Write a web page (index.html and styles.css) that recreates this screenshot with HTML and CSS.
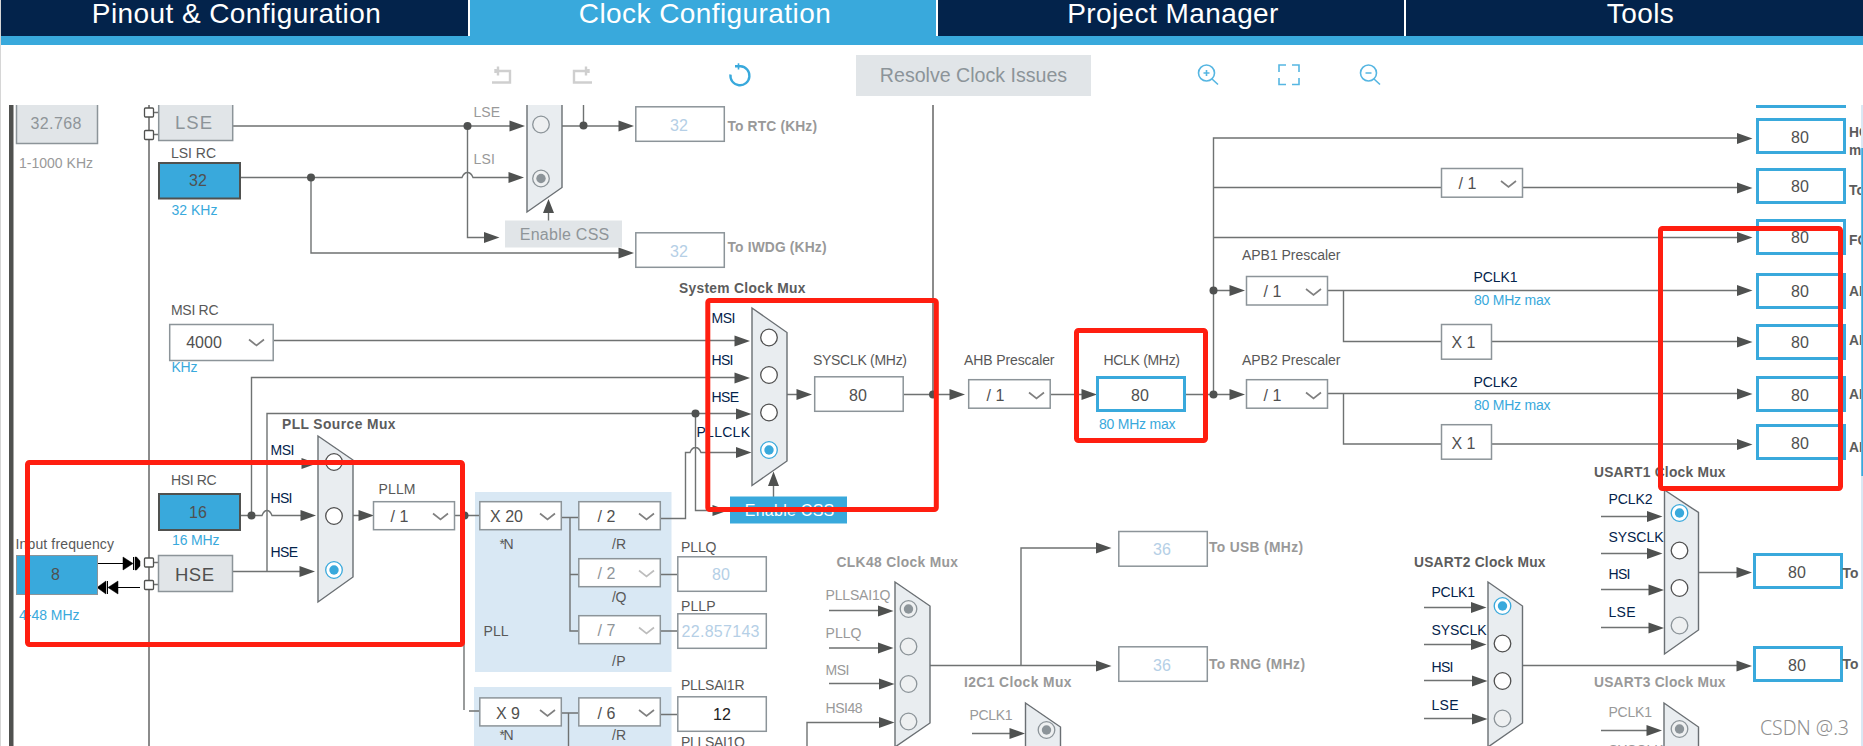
FILE: index.html
```
<!DOCTYPE html>
<html lang="en">
<head>
    <meta charset="UTF-8">
    <meta name="viewport" content="width=device-width, initial-scale=1.0">
    <title>Clock Configuration</title>
    <link rel="stylesheet" href="styles.css">
</head>
<body>

    <nav class="tabs">
        <a class="tab">Pinout &amp; Configuration</a>
        <a class="tab active">Clock Configuration</a>
        <a class="tab">Project Manager</a>
        <a class="tab">Tools</a>
    </nav>

    <div class="toolbar">
        <svg class="tool undo" width="22" height="22" viewBox="0 0 22 22">
            <path d="M1 18.500H19V7H4M7 2.500V11.500M4.500 5V9"/>
        </svg>
        <svg class="tool redo" width="22" height="22" viewBox="0 0 22 22">
            <path d="M20 18.500H2V7H17M14 2.500V11.500M16.500 5V9"/>
        </svg>
        <svg class="tool refresh" width="24" height="24" viewBox="0 0 24 24">
            <path d="M2.500 11.500A9.500 9.500 0 1 0 12.500 3.300H7"/>
            <path class="tip" d="M10.500 0.300V6.500"/>
        </svg>
        <button class="resolve">Resolve Clock Issues</button>
        <svg class="tool zoom-in" width="22" height="22" viewBox="0 0 22 22">
            <circle cx="9.500" cy="9" r="8"/><path d="M6.500 9H12.500M9.500 6V12M15 15L21 20.500"/>
        </svg>
        <svg class="tool fit" width="22" height="22" viewBox="0 0 22 22">
            <path d="M1 8V1H8M14 1H21V8M21 14V20.500H14M8 20.500H1V14"/>
        </svg>
        <svg class="tool zoom-out" width="22" height="22" viewBox="0 0 22 22">
            <circle cx="9.500" cy="9" r="8"/><path d="M6.500 9H12.500M15 15L21 20.500"/>
        </svg>
    </div>

    <main class="canvas">
    <svg width="1863" height="641" viewBox="0 105 1863 641">
        <defs>
            <!-- arrow origin is its tip -->
            <path id="arrow" d="M0 0L-15.500 -5.500V5.500Z"/>
            <path id="chev" d="M0 0L7.500 6L15 0"/>
            <circle id="dot" r="4"/>
            <rect id="pin" width="9" height="9" rx="1"/>
        </defs>

        <!-- PLL panels -->
        <rect class="panel" x="475" y="492" width="196.500" height="180"/>
        <rect class="panel" x="474" y="687" width="197.500" height="70"/>

        <!-- chip edge -->
        <rect class="edge" x="9" y="100" width="4.500" height="650"/>
        <path class="bus" d="M149 105V746M933 105V394"/>

        <!-- wires -->
        <g class="wire">
            <path d="M154 112.500H158M154 134.500H158M154 562.500H158M154 584.500H158"/>
            <path d="M233 126H511M467.500 126V237.500H485"/>
            <path d="M241 177.500H462Q464 172.500 467.500 172.500Q471 172.500 473 177.500H510M311 178V253H620"/>
            <path d="M562 126H620M583.500 105V126M548.500 210V221"/>
            <path d="M274 340.500H736M251.500 515V377.500H736M267 571V413.500H738"/>
            <path d="M241 515.500H262Q264 510.500 267 510.500Q270 510.500 272 515.500H302M233 571.500H300M353 515.500H360"/>
            <path d="M455 515.500H479M464 516V710M469 711H479"/>
            <path d="M562 517.500H578M570 517.500V631H578M570 574.500H578M661 574.500H677M661 631H677"/>
            <path d="M661 518.500H685.500V452.500H690Q692 447.500 695.500 447.500Q699 447.500 701 452.500H738M695.500 413.500V510.500H713"/>
            <path d="M562 713H578M568.500 713V746M661 714.500H677"/>
            <path d="M787 394.500H797M904 394.500H950M773.500 484V497M1051 394.500H1083M1186 394.500H1231"/>
            <path d="M1213.500 394.500V138H1738M1213.500 187.500H1441M1523 187.500H1738M1213.500 237.500H1738M1213.500 290.500H1231"/>
            <path d="M1328 290.500H1738M1343.500 290.500V341.500H1441M1492 341.500H1738"/>
            <path d="M1328 393.500H1738M1343.500 393.500V444H1441M1492 444H1738"/>
            <path d="M829 610.500H879M829 648H879M829 683.500H880M807 746V722.500H880"/>
            <path d="M930 665.500H1097M1021 665.500V548H1097M972 733.500H1010"/>
            <path d="M1601 516.500H1648M1601 553.500H1648M1601 589.500H1649M1601 627.500H1649M1698 572.500H1737"/>
            <path d="M1424 607.500H1472M1424 644.500H1472M1424 680.500H1473M1424 718.500H1473M1522 665.500H1737M1601 730.500H1647"/>
        </g>

        <!-- crystal in / out -->
        <g class="osc">
            <path d="M98 563.500H124M118 587.500H140"/>
            <path class="solid" d="M123 557L133 563.500L123 570ZM135 557H136.500L140 561V566L136.500 570H135ZM118 581L108 587.500L118 594ZM106 581L97 587.500L106 594Z"/>
            <path d="M133.500 557V570M107.500 581V594"/>
        </g>
        <g class="pin">
            <use href="#pin" x="144.500" y="108"/><use href="#pin" x="144.500" y="130.500"/>
            <use href="#pin" x="144.500" y="558"/><use href="#pin" x="144.500" y="580.500"/>
        </g>

        <!-- muxes -->
        <g class="mux">
            <path d="M527 95V212L562 187.500V95Z"/>
            <path d="M318 436V602L353 577V460Z"/>
            <path d="M752 308V485.500L787 461V332.500Z"/>
            <path d="M895 582V747L930 723V606Z"/>
            <path d="M1025.500 703V770H1060.500V727Z"/>
            <path d="M1664.500 490V654L1698.500 630V512.500Z"/>
            <path d="M1488 582V747L1522.500 723V606Z"/>
            <path d="M1664 703V770H1698.500V727Z"/>
        </g>

        <g class="head">
            <use href="#arrow" x="525" y="126"/><use href="#arrow" x="524" y="177.500"/>
            <use href="#arrow" x="499.500" y="237.500"/><use href="#arrow" x="634" y="126"/>
            <use href="#arrow" x="634" y="253"/><use href="#arrow" x="750" y="341"/>
            <use href="#arrow" x="750" y="378"/><use href="#arrow" x="751.500" y="414"/>
            <use href="#arrow" x="751.500" y="452.500"/><use href="#arrow" x="728" y="510.500"/>
            <use href="#arrow" x="317" y="463.500"/><use href="#arrow" x="316" y="515.500"/>
            <use href="#arrow" x="315" y="571.500"/><use href="#arrow" x="374" y="515.500"/>
            <use href="#arrow" x="812" y="394.500"/><use href="#arrow" x="965" y="394.500"/>
            <use href="#arrow" x="1097" y="394.500"/><use href="#arrow" x="1245" y="394.500"/>
            <use href="#arrow" x="1245" y="290.500"/>
            <use href="#arrow" x="1752.500" y="138.500"/><use href="#arrow" x="1752.500" y="188"/>
            <use href="#arrow" x="1752.500" y="237.500"/><use href="#arrow" x="1752.500" y="290.500"/>
            <use href="#arrow" x="1752.500" y="342"/><use href="#arrow" x="1752.500" y="394"/>
            <use href="#arrow" x="1752.500" y="444.500"/>
            <use href="#arrow" x="893.500" y="611"/><use href="#arrow" x="893.500" y="648"/>
            <use href="#arrow" x="894.500" y="684"/><use href="#arrow" x="894.500" y="722.500"/>
            <use href="#arrow" x="1111.500" y="548"/><use href="#arrow" x="1111.500" y="666"/>
            <use href="#arrow" x="1025" y="733.500"/>
            <use href="#arrow" x="1662.500" y="516.500"/><use href="#arrow" x="1662.500" y="553.500"/>
            <use href="#arrow" x="1664" y="590"/><use href="#arrow" x="1664" y="628"/>
            <use href="#arrow" x="1752" y="572.500"/><use href="#arrow" x="1752" y="666"/>
            <use href="#arrow" x="1486.500" y="607.500"/><use href="#arrow" x="1486.500" y="644.500"/>
            <use href="#arrow" x="1487.500" y="681"/><use href="#arrow" x="1487.500" y="719"/>
            <use href="#arrow" x="1662" y="730.500"/>
            <path d="M548.500 199L554 213H543ZM773.500 471.500L779 486H768Z"/>
            <use href="#dot" x="467.500" y="126"/><use href="#dot" x="311" y="177.500"/>
            <use href="#dot" x="583.500" y="125.500"/><use href="#dot" x="251.500" y="515.500"/>
            <use href="#dot" x="464.500" y="515.500"/><use href="#dot" x="695.500" y="413.500"/>
            <use href="#dot" x="933" y="394.500"/><use href="#dot" x="1213.500" y="290.500"/>
            <use href="#dot" x="1213.500" y="394.500"/>
        </g>

        <!-- mux inputs -->
        <g class="radio">
            <circle cx="334" cy="462" r="8.300"/><circle cx="334" cy="516" r="8.300"/>
            <circle cx="769" cy="337.500" r="8.300"/><circle cx="769" cy="375" r="8.300"/><circle cx="769" cy="412.500" r="8.300"/>
            <circle cx="1679.500" cy="550.500" r="8.300"/><circle cx="1679.500" cy="588" r="8.300"/>
            <circle cx="1502.500" cy="643.500" r="8.300"/><circle cx="1502.500" cy="681" r="8.300"/>
        </g>
        <g class="radio off">
            <circle cx="541" cy="124.500" r="8.300"/><circle cx="541" cy="178.500" r="8.300"/>
            <circle cx="908.500" cy="609" r="8.300"/><circle cx="908.500" cy="646.500" r="8.300"/>
            <circle cx="908.500" cy="684" r="8.300"/><circle cx="908.500" cy="721.500" r="8.300"/>
            <circle cx="1046.500" cy="730" r="8.300"/><circle cx="1679.500" cy="729" r="8.300"/>
            <circle cx="1679.500" cy="625.500" r="8.300"/><circle cx="1502.500" cy="718.500" r="8.300"/>
            <circle class="fill" cx="541" cy="178.500" r="4.700"/><circle class="fill" cx="908.500" cy="609" r="4.700"/>
            <circle class="fill" cx="1046.500" cy="730" r="4.700"/><circle class="fill" cx="1679.500" cy="729" r="4.700"/>
        </g>
        <g class="radio on">
            <circle cx="334" cy="570" r="8.300"/><circle class="fill" cx="334" cy="570" r="4.700"/>
            <circle cx="769" cy="450" r="8.300"/><circle class="fill" cx="769" cy="450" r="4.700"/>
            <circle cx="1679.500" cy="513" r="8.300"/><circle class="fill" cx="1679.500" cy="513" r="4.700"/>
            <circle cx="1502.500" cy="606" r="8.300"/><circle class="fill" cx="1502.500" cy="606" r="4.700"/>
        </g>

        <!-- boxes -->
        <g class="box gray">
            <rect x="16.500" y="95" width="81" height="48.500"/>
            <rect x="158.700" y="95" width="74" height="45.500"/>
            <rect x="158.500" y="555.500" width="74" height="36"/>
        </g>
        <g class="box source">
            <rect x="159" y="163" width="81" height="35.500"/>
            <rect x="159" y="494" width="81" height="36"/>
            <rect class="input" x="16.500" y="555.500" width="81" height="39"/>
        </g>
        <g class="box">
            <rect x="635.800" y="106.800" width="88.500" height="34.500"/>
            <rect x="635.800" y="232.800" width="88.500" height="34.500"/>
            <rect x="169.700" y="324.500" width="103.500" height="36"/>
            <rect x="373.500" y="501.700" width="81" height="28"/>
            <rect x="479.800" y="501.700" width="81.500" height="28"/>
            <rect x="578.800" y="501.700" width="81.500" height="28"/>
            <rect x="578.800" y="558.700" width="81.500" height="28"/>
            <rect x="578.800" y="615.700" width="81.500" height="28"/>
            <rect x="479.800" y="697.900" width="81.500" height="28"/>
            <rect x="578.800" y="697.900" width="81.500" height="28"/>
            <rect x="677.800" y="556.800" width="88.500" height="34.500"/>
            <rect x="677.800" y="613.800" width="88.500" height="34.500"/>
            <rect x="677.800" y="696.800" width="88.500" height="34.500"/>
            <rect x="814.700" y="376.800" width="88.500" height="34.500"/>
            <rect x="968.700" y="379.700" width="81.500" height="28.500"/>
            <rect x="1246.500" y="276.500" width="81" height="28.500"/>
            <rect x="1246.500" y="379.700" width="81" height="28.500"/>
            <rect x="1441.500" y="168.500" width="81" height="28.700"/>
            <rect x="1441.500" y="324.500" width="50" height="34.700"/>
            <rect x="1441.500" y="424.700" width="50" height="34.500"/>
            <rect x="1118.800" y="531.500" width="88.500" height="34.700"/>
            <rect x="1118.800" y="646.800" width="88.500" height="34.500"/>
        </g>
        <g class="box clock">
            <rect x="1097.500" y="377.500" width="87" height="33"/>
            <rect x="1757.500" y="73.500" width="87" height="33"/>
            <rect x="1757.500" y="119.500" width="87" height="33"/>
            <rect x="1757.500" y="169.500" width="87" height="33"/>
            <rect x="1757.500" y="220.500" width="87" height="33"/>
            <rect x="1757.500" y="274.500" width="87" height="33"/>
            <rect x="1757.500" y="325.500" width="87" height="33"/>
            <rect x="1757.500" y="377.500" width="87" height="33"/>
            <rect x="1757.500" y="425.500" width="87" height="33"/>
            <rect x="1754.500" y="554.500" width="87" height="33"/>
            <rect x="1754.500" y="647.500" width="87" height="33"/>
        </g>
        <rect class="css-btn" x="505" y="220.500" width="117" height="27"/>
        <rect class="css-btn on" x="730" y="496.500" width="117" height="27"/>

        <g class="chev">
            <use href="#chev" x="249" y="339.500"/><use href="#chev" x="433" y="513.500"/>
            <use href="#chev" x="540" y="513.500"/><use href="#chev" x="639" y="513.500"/>
            <use href="#chev" x="540" y="710"/><use href="#chev" x="639" y="710"/>
            <use href="#chev" x="1029" y="392.500"/><use href="#chev" x="1306" y="289"/>
            <use href="#chev" x="1306" y="392.500"/><use href="#chev" x="1501" y="181"/>
        </g>
        <g class="chev dim">
            <use href="#chev" x="639" y="570.500"/><use href="#chev" x="639" y="627.500"/>
        </g>

        <!-- captions -->
        <g class="cap">
            <text x="171" y="158" textLength="45">LSI RC</text>
            <text x="171" y="315" textLength="47.500">MSI RC</text>
            <text x="171" y="485" textLength="45.500">HSI RC</text>
            <text x="15.500" y="549" textLength="98.500">Input frequency</text>
            <text x="378.500" y="494" textLength="37">PLLM</text>
            <text x="499.500" y="549" textLength="14">*N</text>
            <text x="612" y="549" textLength="14">/R</text>
            <text x="612" y="602" textLength="14.500">/Q</text>
            <text x="612" y="666" textLength="13.500">/P</text>
            <text x="483.500" y="636" textLength="25">PLL</text>
            <text x="499.500" y="740" textLength="14">*N</text>
            <text x="612" y="740" textLength="14">/R</text>
            <text x="681" y="552" textLength="35.500">PLLQ</text>
            <text x="681" y="611" textLength="34.500">PLLP</text>
            <text x="681" y="690" textLength="63.500">PLLSAI1R</text>
            <text x="681" y="746.500" textLength="64">PLLSAI1Q</text>
            <text x="813" y="365" textLength="94">SYSCLK (MHz)</text>
            <text x="964" y="365" textLength="90.500">AHB Prescaler</text>
            <text x="1103.500" y="365" textLength="76.500">HCLK (MHz)</text>
            <text x="1242" y="260" textLength="98.500">APB1 Prescaler</text>
            <text x="1242" y="365" textLength="98.500">APB2 Prescaler</text>
        </g>
        <g class="cap dim">
            <text x="19" y="168" textLength="74">1-1000 KHz</text>
            <text x="473.500" y="117" textLength="26.500">LSE</text>
            <text x="473.500" y="164" textLength="21.500">LSI</text>
            <text x="825.500" y="600" textLength="65">PLLSAI1Q</text>
            <text x="825.500" y="638" textLength="36">PLLQ</text>
            <text x="825.500" y="675" textLength="24">MSI</text>
            <text x="825.500" y="713" textLength="37">HSI48</text>
            <text x="969.500" y="720" textLength="43">PCLK1</text>
            <text x="1608.500" y="717" textLength="43.500">PCLK1</text>
            <text x="1608.500" y="754.500" textLength="55">SYSCLK</text>
        </g>
        <g class="cap sig">
            <text x="270.500" y="455" textLength="24">MSI</text>
            <text x="270.500" y="502.500" textLength="22">HSI</text>
            <text x="270.500" y="557" textLength="27.500">HSE</text>
            <text x="711.500" y="323" textLength="24">MSI</text>
            <text x="711.500" y="365" textLength="22">HSI</text>
            <text x="711.500" y="402" textLength="27.500">HSE</text>
            <text x="696.500" y="437" textLength="53.500">PLLCLK</text>
            <text x="1473.500" y="282" textLength="44">PCLK1</text>
            <text x="1473.500" y="387" textLength="44">PCLK2</text>
            <text x="1608.500" y="504" textLength="44">PCLK2</text>
            <text x="1608.500" y="542" textLength="55">SYSCLK</text>
            <text x="1608.500" y="579" textLength="22">HSI</text>
            <text x="1608.500" y="617" textLength="27">LSE</text>
            <text x="1431.500" y="597" textLength="43.500">PCLK1</text>
            <text x="1431.500" y="635" textLength="55">SYSCLK</text>
            <text x="1431.500" y="672" textLength="22">HSI</text>
            <text x="1431.500" y="710" textLength="27">LSE</text>
        </g>
        <g class="cap limit">
            <text x="171.500" y="215" textLength="46">32 KHz</text>
            <text x="171.500" y="372" textLength="26">KHz</text>
            <text x="172" y="545" textLength="47.500">16 MHz</text>
            <text x="19" y="620" textLength="60.500">4-48 MHz</text>
            <text x="1099" y="429" textLength="76.500">80 MHz max</text>
            <text x="1474" y="305" textLength="76.500">80 MHz max</text>
            <text x="1474" y="410" textLength="76.500">80 MHz max</text>
        </g>
        <g class="title">
            <text x="282" y="429" textLength="113.500">PLL Source Mux</text>
            <text x="679" y="293" textLength="126.500">System Clock Mux</text>
            <text x="1594" y="477" textLength="131.500">USART1 Clock Mux</text>
            <text x="1414" y="567" textLength="131.500">USART2 Clock Mux</text>
            <text x="1849" y="137">HC</text>
            <text x="1849" y="155">m</text>
            <text x="1849" y="195">To</text>
            <text x="1849" y="245">FC</text>
            <text x="1849" y="296">AP</text>
            <text x="1849" y="345">AP</text>
            <text x="1849" y="399">AP</text>
            <text x="1849" y="452">AP</text>
            <text x="1842.500" y="578" textLength="16">To</text>
            <text x="1842.500" y="669" textLength="16">To</text>
        </g>
        <g class="title dim">
            <text x="727.500" y="131" textLength="89.500">To RTC (KHz)</text>
            <text x="727.500" y="252" textLength="99">To IWDG (KHz)</text>
            <text x="836.500" y="567" textLength="121.500">CLK48 Clock Mux</text>
            <text x="964" y="687" textLength="107.500">I2C1 Clock Mux</text>
            <text x="1594" y="687" textLength="131.500">USART3 Clock Mux</text>
            <text x="1209" y="552" textLength="94">To USB (MHz)</text>
            <text x="1209" y="669" textLength="96">To RNG (MHz)</text>
        </g>

        <!-- values -->
        <g class="val">
            <text x="198" y="185.500">32</text>
            <text x="198" y="518">16</text>
            <text x="55.500" y="580">8</text>
            <text x="204" y="348">4000</text>
            <text x="399.500" y="522">/ 1</text>
            <text x="506.500" y="522">X 20</text>
            <text x="606.500" y="522">/ 2</text>
            <text x="508" y="718.500">X 9</text>
            <text x="606.500" y="718.500">/ 6</text>
            <text class="black" x="722" y="720">12</text>
            <text x="858" y="401">80</text>
            <text x="995.500" y="400.500">/ 1</text>
            <text x="1140" y="401">80</text>
            <text x="1272.500" y="297">/ 1</text>
            <text x="1272.500" y="400.500">/ 1</text>
            <text x="1467.500" y="189">/ 1</text>
            <text x="1463.500" y="348">X 1</text>
            <text x="1463.500" y="449">X 1</text>
            <text x="1800" y="143">80</text>
            <text x="1800" y="192">80</text>
            <text x="1800" y="243">80</text>
            <text x="1800" y="297">80</text>
            <text x="1800" y="348">80</text>
            <text x="1800" y="401">80</text>
            <text x="1800" y="449">80</text>
            <text x="1797" y="578">80</text>
            <text x="1797" y="671">80</text>
        </g>
        <g class="val dim">
            <text x="56" y="129" textLength="51">32.768</text>
            <text x="564.500" y="240" textLength="89.500">Enable CSS</text>
            <text x="606.500" y="579">/ 2</text>
            <text x="606.500" y="636">/ 7</text>
        </g>
        <g class="val pale">
            <text x="679" y="131">32</text>
            <text x="679" y="257">32</text>
            <text x="721" y="580">80</text>
            <text x="720.500" y="637" textLength="78">22.857143</text>
            <text x="1162" y="555">36</text>
            <text x="1162" y="671">36</text>
        </g>
        <text class="val white" x="789.500" y="516" textLength="89.500">Enable CSS</text>
        <text class="osc-name dim" x="175" y="129" textLength="37">LSE</text>
        <text class="osc-name" x="175" y="581" textLength="39">HSE</text>

        <!-- scrollbar -->
        <rect class="track" x="1861" y="105" width="3" height="641"/>
        <rect class="thumb" x="1861.300" y="148" width="3" height="328"/>

        <!-- highlights -->
        <g class="mark">
            <rect x="27.500" y="462.500" width="435" height="182" rx="2"/>
            <rect x="707.800" y="300.500" width="228.500" height="209" rx="2"/>
            <rect x="1076.500" y="330.500" width="129" height="110" rx="2"/>
            <rect x="1660.500" y="228.500" width="180" height="260" rx="2"/>
        </g>

        <text class="watermark" x="1760" y="735" textLength="89">CSDN @.3</text>
    </svg>
    </main>

</body>
</html>
```
FILE: styles.css
```
* {
    box-sizing: border-box;
}
body {
    font-family: "Liberation Sans", Arial, sans-serif;
    margin: 0;
    height: 746px;
    overflow: hidden;
    background-color: #fff;
    box-shadow: inset 1px 0 0 #d6d6d6;
}
/* Tabs */
.tabs {
    display: grid;
    grid-template-columns: 469px 468px 468px 1fr;
    height: 45px;
    margin-left: 1px;
    border-bottom: 9px solid #39a9dc;
}
.tab {
    height: 36px;
    padding-left: 4px;
    background-color: #03234b;
    border-right: 2px solid #fff;
    color: #fff;
    font-size: 28px;
    line-height: 28px;
    letter-spacing: 0.42px;
    text-align: center;
}
.tab:last-child {
    padding-left: 12px;
    border-right: none;
}
.tab.active {
    background-color: #39a9dc;
}
/* Toolbar */
.toolbar {
    display: flex;
    align-items: center;
    height: 60px;
    padding-left: 491px;
}
.tool {
    fill: none;
    stroke: #56b6e2;
    stroke-width: 1.6;
}
.undo, .redo {
    stroke: #cfcfcf;
    stroke-width: 2.4;
}
.redo {
    margin-left: 59px;
}
.refresh {
    margin-left: 134px;
    stroke: #39a9dc;
    stroke-width: 2.4;
}
.refresh .tip {
    stroke-width: 1.6;
}
.resolve {
    width: 235px;
    height: 41px;
    margin-left: 104px;
    padding: 0;
    border: none;
    background-color: #e1e5e8;
    color: #8c9499;
    font-family: inherit;
    font-size: 19.6px;
}
.zoom-in {
    margin-left: 106px;
}
.fit, .zoom-out {
    margin-left: 59px;
}
/* Clock tree */
.canvas {
    height: 641px;
}
.canvas svg {
    display: block;
}
.panel {
    fill: #d9e8f4;
}
.edge {
    fill: #50514f;
}
.bus {
    fill: none;
    stroke: #8b8b8b;
    stroke-width: 2;
}
.wire {
    fill: none;
    stroke: #6f7272;
    stroke-width: 1.4;
}
.head {
    fill: #4f5150;
}
.osc {
    fill: none;
    stroke: #000;
}
.osc .solid {
    fill: #000;
    stroke-width: 0.5;
}
.pin {
    fill: #fff;
    stroke: #50514f;
    stroke-width: 1.3;
}
.mux {
    fill: #e9edf0;
    stroke: #6a6f73;
    stroke-width: 1.4;
}
.radio {
    fill: #fff;
    stroke: #505050;
    stroke-width: 1.3;
}
.radio.off {
    fill: #eef0f1;
    stroke: #8c9499;
}
.radio.on {
    stroke: #39a9dc;
}
.radio .fill {
    fill: #39a9dc;
    stroke: none;
}
.radio.off .fill {
    fill: #8c9499;
}
.box {
    fill: #fff;
    stroke: #8c9499;
    stroke-width: 1.5;
}
.box.gray {
    fill: #e1e5e8;
}
.box.source {
    fill: #39a9dc;
    stroke: #50514f;
    stroke-width: 2;
}
.box.source .input {
    stroke: #8c9499;
    stroke-width: 1;
}
.box.clock {
    stroke: #39a9dc;
    stroke-width: 3;
}
.css-btn {
    fill: #e1e5e8;
}
.css-btn.on {
    fill: #39a9dc;
}
.chev {
    fill: none;
    stroke: #808080;
    stroke-width: 1.7;
}
.chev.dim {
    stroke: #bdbdbd;
}
/* Text */
.cap {
    fill: #585858;
    font-size: 14px;
}
.title {
    fill: #5c5c5c;
    font-size: 13.8px;
    font-weight: bold;
}
.cap.dim, .title.dim {
    fill: #999;
}
.cap.sig {
    fill: #03234b;
}
.cap.limit {
    fill: #39a9dc;
}
.val {
    fill: #505050;
    font-size: 16px;
    text-anchor: middle;
}
.val.dim {
    fill: #8f9599;
}
.val.pale {
    fill: #b5cfe6;
}
.val.white {
    fill: #fff;
}
.val .black {
    fill: #222;
}
.osc-name {
    fill: #505050;
    font-size: 18.5px;
}
.osc-name.dim {
    fill: #8c9499;
}
.track {
    fill: #d9e8f4;
}
.thumb {
    fill: #39a9dc;
}
.mark {
    fill: none;
    stroke: #ff1e10;
    stroke-width: 5;
}
.watermark {
    fill: #8f8f8f;
    font-family: "Noto Sans", sans-serif;
    font-size: 19.5px;
    font-weight: 300;
}
```
